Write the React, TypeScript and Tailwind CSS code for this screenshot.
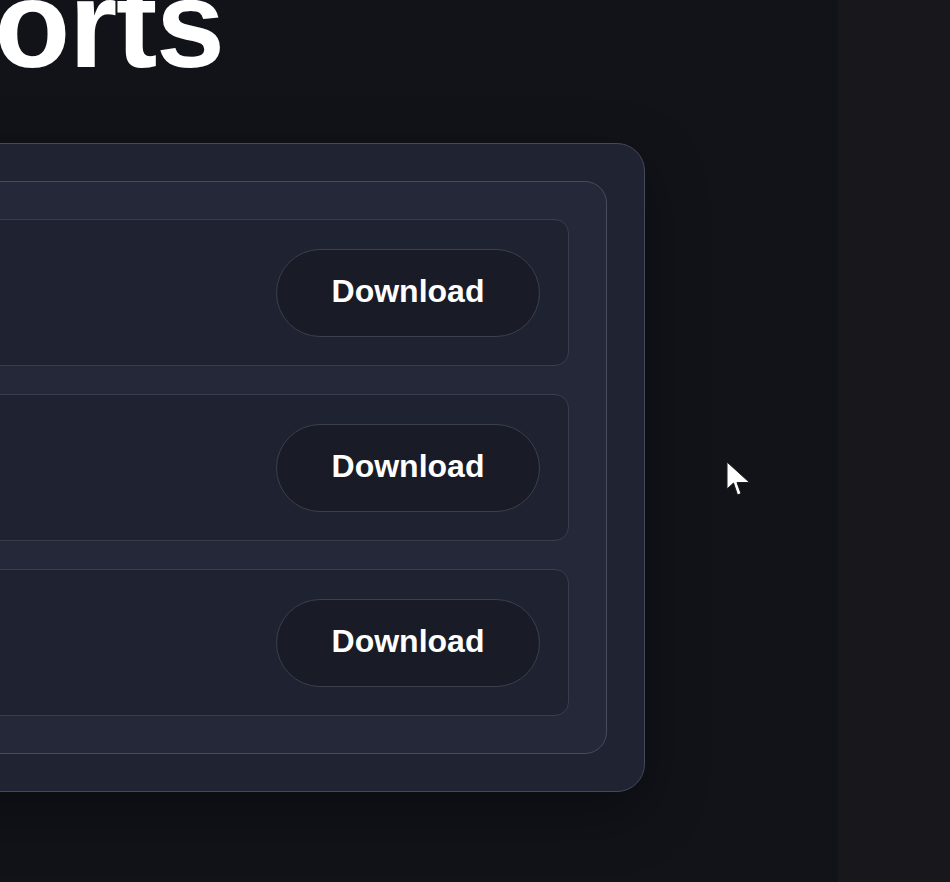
const rows = ['monthly', 'quarterly', 'annual'];

function Cursor() {
  return (
    <svg
      className="absolute left-[726px] top-[461px]"
      width="26"
      height="38"
      viewBox="0 0 26 38"
      fill="none"
    >
      <path
        d="M1 1 L1 28 L7.5 22 L11.5 34 L15 32.5 L11 21.5 L23.5 21.5 Z"
        fill="#ffffff"
        stroke="#1a1c22"
        strokeWidth="1"
        strokeLinejoin="round"
      />
    </svg>
  );
}

export default function App() {
  return (
    <div
      className="relative flex h-[882px] w-full overflow-hidden bg-[#111319]"
      style={{ fontFamily: '"Liberation Sans", Arial, sans-serif' }}
    >
      <main className="flex-1">
        <h1 className="-ml-[236px] -mt-[38px] h-[120px] whitespace-nowrap text-[124px] font-bold leading-none tracking-[-0.01em] text-white">
          Reports
        </h1>

        {/* outer card */}
        <section className="-ml-[300px] mt-[61px] w-[945px] rounded-[28px] border border-[#444a5a] bg-[#1f2332] p-[37px] shadow-[0_20px_60px_rgba(0,0,0,0.35)]">
          {/* inner panel */}
          <div className="flex flex-col gap-[28px] rounded-[22px] border border-[#454c5e] bg-[#242838] p-[37px]">
            {rows.map((r) => (
              <div
                key={r}
                className="flex h-[147px] items-center justify-end rounded-[14px] border border-[#383e4e] bg-[#1f2331] pr-[28px]"
              >
                <button className="h-[88px] w-[264px] rounded-full border border-[#3a404e] bg-[#191c27] pb-[3px] text-[32px] font-bold text-white">
                  Download
                </button>
              </div>
            ))}
          </div>
        </section>
      </main>
      <div className="w-[112px] bg-[#18171c]" />
      <Cursor />
    </div>
  );
}
